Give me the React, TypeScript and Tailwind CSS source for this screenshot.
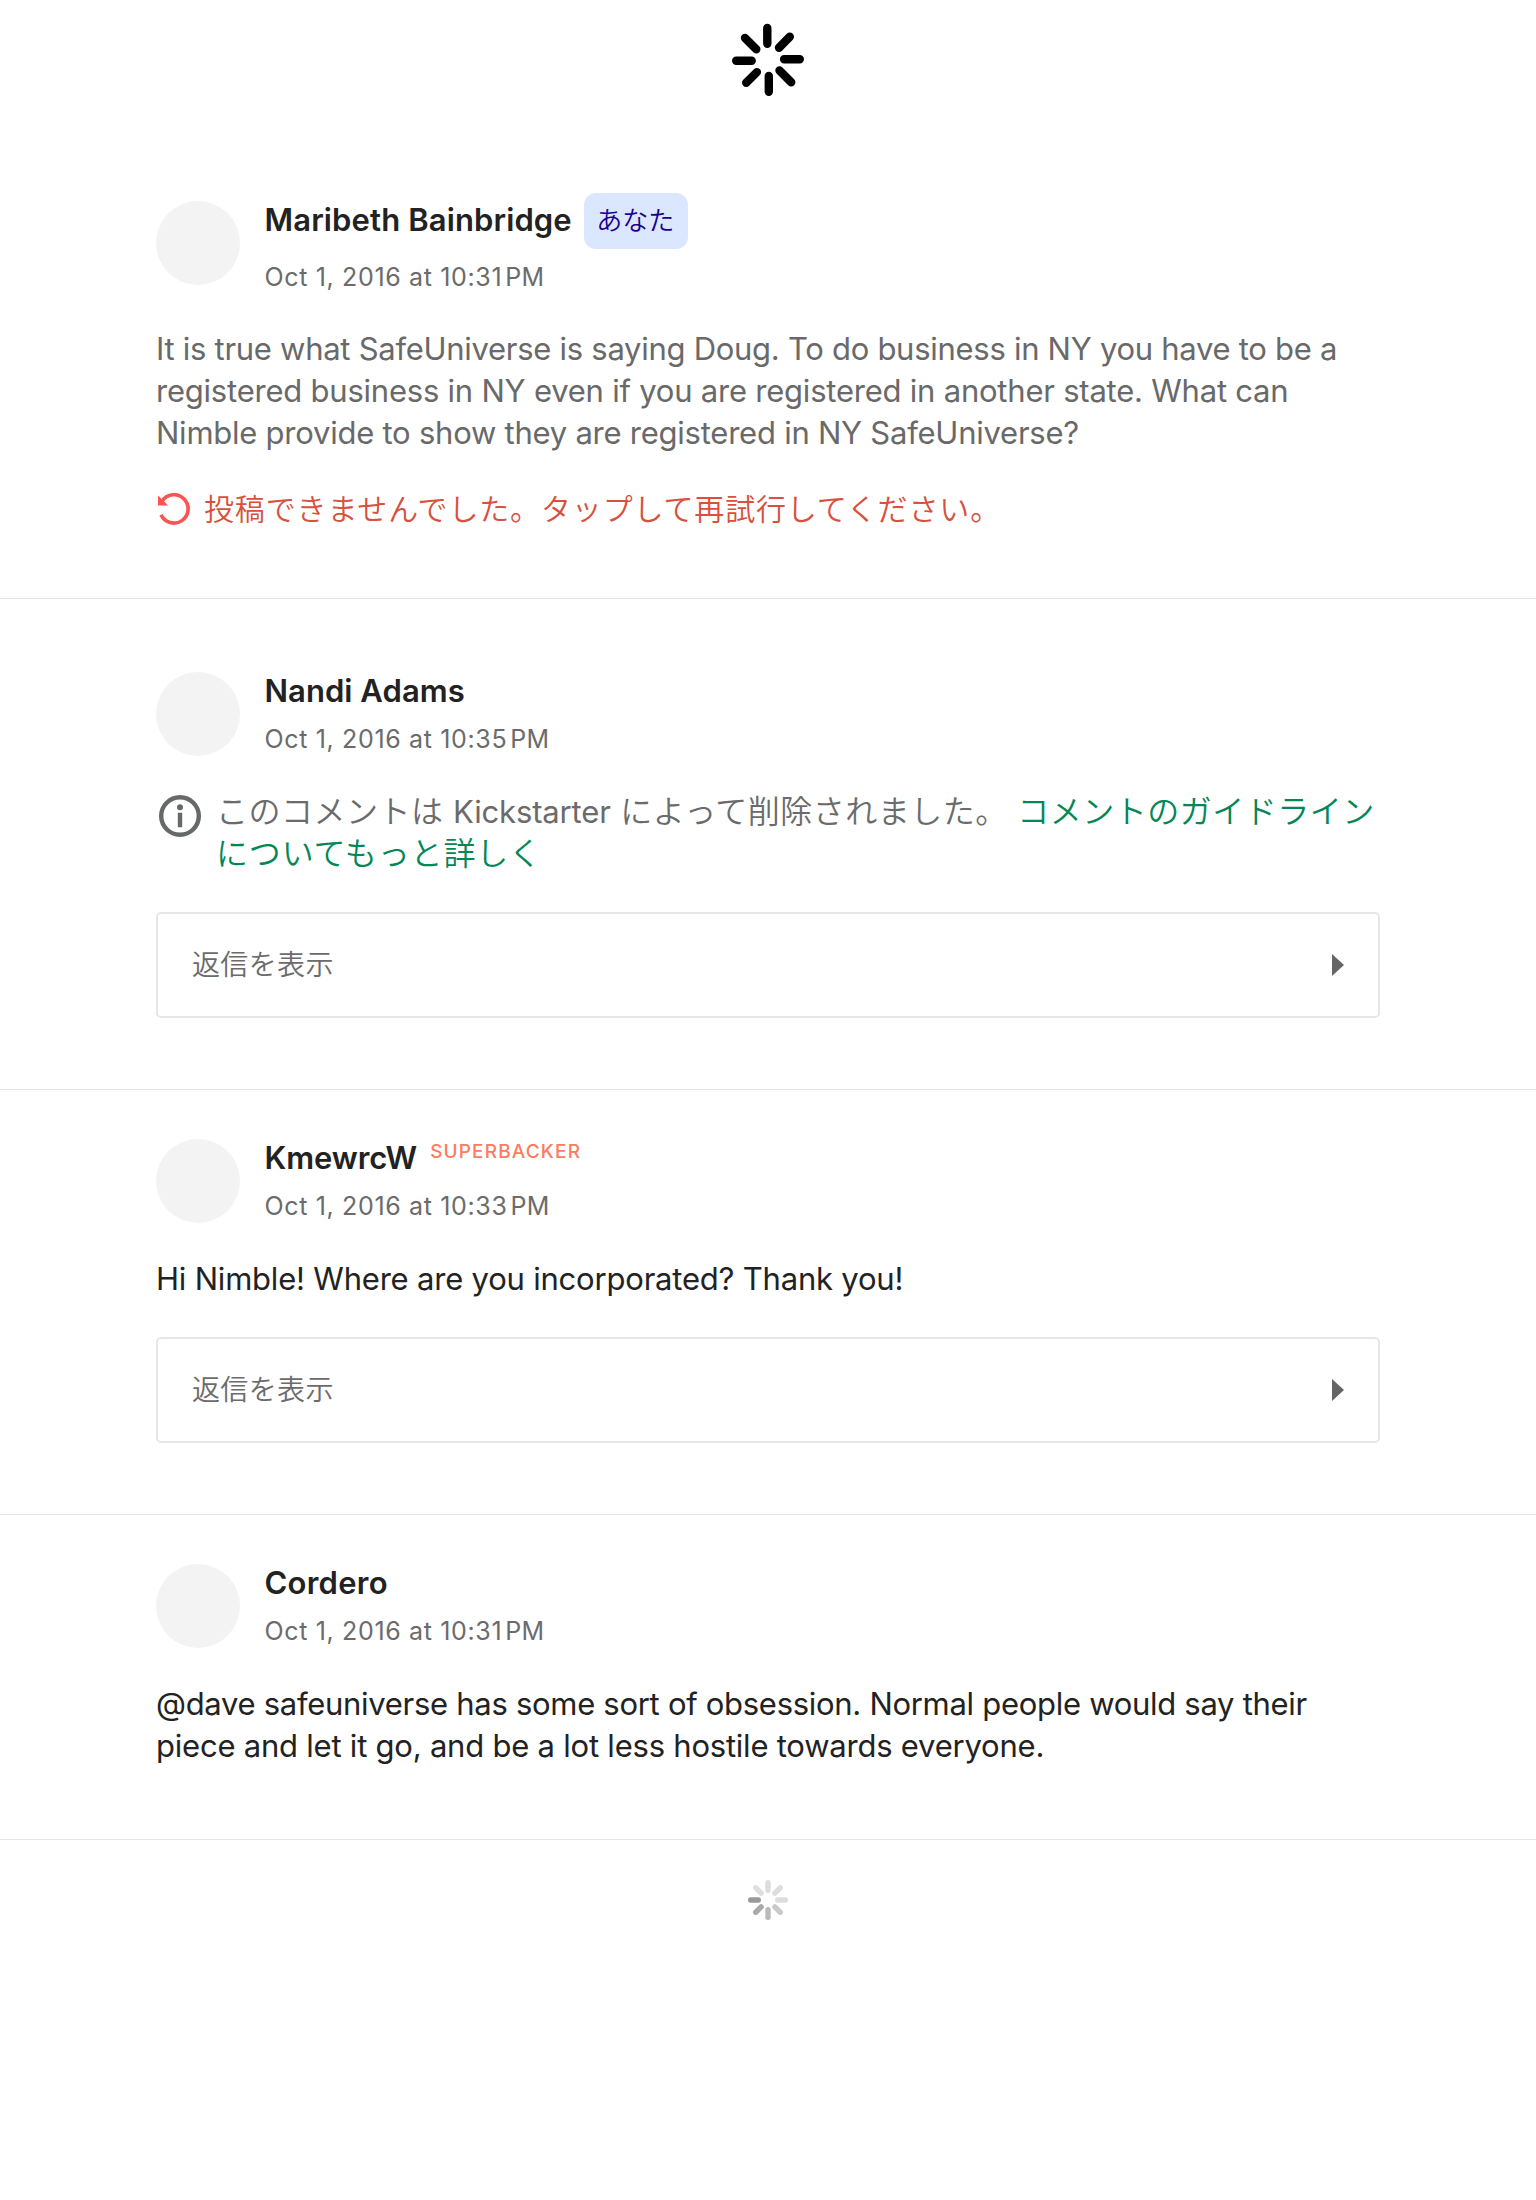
import type { ReactNode } from "react";

function Avatar({ className = "" }: { className?: string }) {
  return <div className={`size-[84px] shrink-0 rounded-full bg-[#f3f3f3] ${className}`} />;
}

function PullSpinner() {
  return (
    <svg width="80" height="80" viewBox="0 20 80 80" fill="none" stroke="#000" strokeWidth="8.4" strokeLinecap="round">
      <path d="M39.3 27.9V43.8M61.8 36.7 51 47.7M71.8 59.3H56.1M63.2 82.2 51.5 70.5M40.8 91.8V75.9M18.2 82.8 28.9 72.1M8.2 60.8H23.7M17 38 28.3 49.2" />
    </svg>
  );
}

const petals = [
  { angle: 0, color: "#dddddd" },
  { angle: 45, color: "#dddddd" },
  { angle: 90, color: "#dddddd" },
  { angle: 135, color: "#cacaca" },
  { angle: 180, color: "#bababb" },
  { angle: 225, color: "#a9a9aa" },
  { angle: 270, color: "#99999a" },
  { angle: 315, color: "#dfdfdf" },
];

function LoadingSpinner() {
  return (
    <svg width="40" height="40" viewBox="0 0 40 40">
      {petals.map((p) => (
        <rect key={p.angle} x="17.3" y="0" width="5.4" height="13" rx="2.7" fill={p.color} transform={`rotate(${p.angle} 20 20)`} />
      ))}
    </svg>
  );
}

function RetryIcon() {
  return (
    <svg width="32" height="32" viewBox="0 0 32 32" fill="none">
      <path d="M3 21.8A14.2 14.2 0 1 0 4.4 7.6" stroke="#ff5353" strokeWidth="3.6" />
      <path d="M0 2.4V12.4H10.2Z" fill="#ff5353" />
    </svg>
  );
}

function InfoIcon() {
  return (
    <svg width="42" height="42" viewBox="0 0 42 42" fill="#656969">
      <circle cx="21" cy="21" r="18.8" fill="none" stroke="#656969" strokeWidth="4.4" />
      <circle cx="21" cy="12.3" r="3" />
      <rect x="18.8" y="17.7" width="4.4" height="14.6" rx="0.4" />
    </svg>
  );
}

function Timestamp({ time }: { time: string }) {
  return (
    <div className="flex h-8 gap-[3px] text-[25px] leading-8 tracking-[0.65px] whitespace-nowrap text-[#6b6b6b]">
      <span>Oct 1, 2016 at {time}</span>
      <span className="tracking-[0.2px]">PM</span>
    </div>
  );
}

function Author({ children, tracking, badge }: { children: ReactNode; tracking: string; badge?: ReactNode }) {
  return (
    <div className="flex h-[38px] items-center">
      <span className={`text-[31px] leading-[38px] font-semibold text-[#222222] ${tracking}`}>{children}</span>
      {badge}
    </div>
  );
}

function Header({ children, time }: { children: ReactNode; time: string }) {
  return (
    <div className="flex h-[84px] gap-[24.5px]">
      <Avatar />
      <div className="flex flex-col gap-[13px]">
        {children}
        <Timestamp time={time} />
      </div>
    </div>
  );
}

function Body({ lines, className }: { lines: { text: string; tracking: string }[]; className: string }) {
  return (
    <p className={`text-[31px] leading-[42px] whitespace-nowrap ${className}`}>
      {lines.map((l) => (
        <span key={l.text} className={`block ${l.tracking}`}>
          {l.text}
        </span>
      ))}
    </p>
  );
}

function ViewReplies() {
  return (
    <button className="mt-[37px] flex h-[106px] w-full items-center justify-between rounded-[5px] border-2 border-[#e6e6e6] pr-[34px] pl-[34px]">
      <span className="text-[28px] leading-8 font-[350] tracking-[0.35px] text-[#6b6b6b]">返信を表示</span>
      <svg width="12" height="22" viewBox="0 0 12 22" fill="#656565">
        <path d="M0 0L12 11L0 22Z" />
      </svg>
    </button>
  );
}

export default function App() {
  return (
    <main className="h-[2200px] bg-white font-['Inter','Noto_Sans_CJK_JP',sans-serif]">
      <div className="flex h-[193px] justify-center pt-5">
        <PullSpinner />
      </div>

      <article className="h-[406px] border-b border-[#e4e4e4] px-[156px]">
        <div className="flex gap-[24.5px]">
          <Avatar className="mt-2" />
          <div>
            <div className="flex h-14">
              <span className="mt-[8px] text-[31px] leading-[38px] font-semibold tracking-[0.12px] text-[#222222]">Maribeth Bainbridge</span>
              <span className="ml-[12px] flex h-14 w-[104px] justify-center rounded-xl bg-[#dbe7ff] pt-[9.5px] pr-[1px] text-[26px] leading-9 font-[350] text-[#1a0093]">
                あなた
              </span>
            </div>
            <div className="mt-3">
              <Timestamp time="10:31" />
            </div>
          </div>
        </div>
        <Body
          className="mt-[35px] text-[#696969]"
          lines={[
            { text: "It is true what SafeUniverse is saying Doug. To do business in NY you have to be a", tracking: "tracking-[-0.28px]" },
            { text: "registered business in NY even if you are registered in another state. What can", tracking: "tracking-[-0.22px]" },
            { text: "Nimble provide to show they are registered in NY SafeUniverse?", tracking: "tracking-[-0.24px]" },
          ]}
        />
        <div className="mt-[34px] flex h-[42px] items-center gap-[14px] pl-[2px]">
          <RetryIcon />
          <span className="text-[30px] leading-[42px] font-[350] tracking-[0.85px] text-[#d9503d]">
            投稿できませんでした。タップして再試行してください。
          </span>
        </div>
      </article>

      <article className="h-[491px] border-b border-[#e4e4e4] px-[156px] pt-[73px]">
        <Header time="10:35">
          <Author tracking="tracking-[0.05px]">Nandi Adams</Author>
        </Header>
        <div className="mt-[35px] flex gap-[15px] pl-[3px]">
          <div className="mt-1 shrink-0">
            <InfoIcon />
          </div>
          <p className="text-[32px] leading-[42px] font-[350] tracking-[0.5px] whitespace-nowrap text-[#6b6b6b]">
            このコメントは <span className="text-[31px] font-normal tracking-[-0.15px]">Kickstarter</span> によって削除されました。{" "}
            <a className="text-[#038756]">
              コメントのガイドライン
              <br />
              <span className="tracking-[0.85px]">についてもっと詳しく</span>
            </a>
          </p>
        </div>
        <ViewReplies />
      </article>

      <article className="h-[425px] border-b border-[#e4e4e4] px-[156px] pt-[49px]">
        <Header time="10:33">
          <Author
            tracking="tracking-[-0.1px]"
            badge={<span className="-mt-[13px] ml-[13px] text-[19px] leading-6 font-medium tracking-[1.15px] text-[#ff7a5f]">SUPERBACKER</span>}
          >
            KmewrcW
          </Author>
        </Header>
        <Body className="mt-[35px] text-[#222222]" lines={[{ text: "Hi Nimble! Where are you incorporated? Thank you!", tracking: "tracking-[-0.2px]" }]} />
        <ViewReplies />
      </article>

      <article className="h-[325px] border-b border-[#e4e4e4] px-[156px] pt-[49px]">
        <Header time="10:31">
          <Author tracking="tracking-[0.25px]">Cordero</Author>
        </Header>
        <Body
          className="mt-[35px] text-[#222222]"
          lines={[
            { text: "@dave safeuniverse has some sort of obsession. Normal people would say their", tracking: "tracking-[-0.29px]" },
            { text: "piece and let it go, and be a lot less hostile towards everyone.", tracking: "tracking-[-0.22px]" },
          ]}
        />
      </article>

      <div className="flex justify-center pt-10">
        <LoadingSpinner />
      </div>
    </main>
  );
}
